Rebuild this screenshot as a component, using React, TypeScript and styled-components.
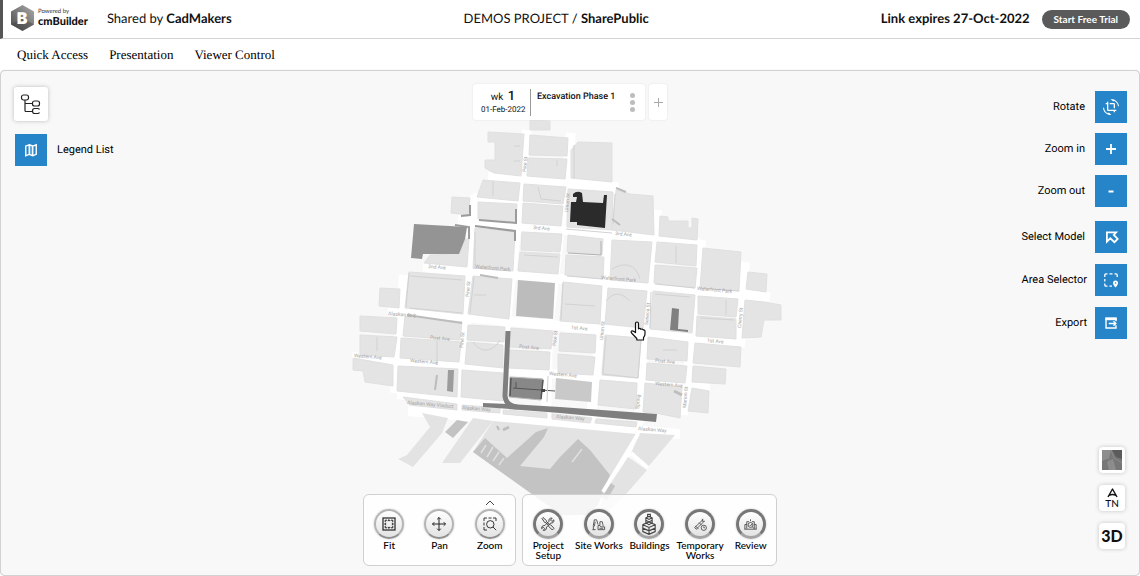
import React from 'react';
import styled, { createGlobalStyle } from 'styled-components';
import { MdCropRotate } from 'react-icons/md';

const lato = `Lato, "Open Sans", sans-serif`;
const roboto = `Roboto, "Liberation Sans", sans-serif`;

const GlobalStyle = createGlobalStyle`
  *, *::before, *::after { box-sizing: border-box; }
  body { margin: 0; background: #fff; color: #111; font-family: ${lato}; text-rendering: geometricPrecision; }
  button { font: inherit; color: inherit; padding: 0; border: 0; background: none; cursor: pointer; }
  h1, p { margin: 0; }
`;

const Page = styled.div`
  display: flex;
  flex-direction: column;
  min-height: 100vh;
`;

const Header = styled.header`
  display: flex;
  justify-content: space-between;
  align-items: center;
  height: 39px;
  padding: 0 10px 2px 8px;
  border-left: 3px solid #555;
  border-bottom: 1px solid #d4d4d4;
  font-size: 13px;
`;

const HeaderSide = styled.div<{ $gap: number }>`
  display: flex;
  align-items: center;
  gap: ${(p) => p.$gap}px;
`;

const Brand = styled.a`
  display: flex;
  align-items: center;
  gap: 4px;
  color: #111;
  text-decoration: none;
`;

const BrandText = styled.span`
  display: grid;
  padding-bottom: 2px;
  font: 900 11px/11px ${lato};
`;

const Powered = styled.small`
  font: 400 6px/8px ${lato};
  color: #333;
`;

const Title = styled.h1`
  font-size: 13px;
  font-weight: 400;
`;

const TrialButton = styled.button`
  height: 19px;
  margin-top: 2px;
  padding: 0 12px;
  border-radius: 10px;
  background: #5a5a5a;
  color: #fff;
  font: 700 10px/19px ${lato};
`;

const Nav = styled.nav`
  display: flex;
  align-items: center;
  gap: 21px;
  height: 31px;
  padding: 0 17px;
`;

const NavLink = styled.a`
  color: #000;
  font: 400 13px/16px "Liberation Serif", serif;
  text-decoration: none;
`;

const Viewport = styled.main`
  position: relative;
  flex: 1;
  display: grid;
  grid-template-columns: 1fr auto 1fr;
  grid-template-rows: auto 1fr auto;
  overflow: hidden;
  border: 1px solid #d2d2d2;
  border-radius: 5px;
  background: #f8f8f8;
  box-shadow: 0 0 1px #ccc;
`;

const MapLayer = styled.div`
  position: absolute;
  inset: 44px 0 auto;
  display: flex;
  justify-content: center;
`;

const LeftTools = styled.div`
  position: relative;
  display: grid;
  align-content: start;
  gap: 13px;
  padding: 16px 0 0 13px;
`;

const TreeButton = styled.button`
  display: grid;
  place-items: center;
  width: 34px;
  height: 34px;
  border-radius: 3px;
  background: #fff;
  box-shadow: 0 0 4px #bbb;
`;

const ToolRow = styled.label<{ $gap: number; $left?: boolean }>`
  display: flex;
  flex-direction: ${(p) => (p.$left ? 'row-reverse' : 'row')};
  align-items: center;
  justify-content: flex-end;
  gap: ${(p) => p.$gap}px;
  padding-left: ${(p) => (p.$left ? 1 : 0)}px;
  font: 400 11px/16px ${roboto};
  color: #000;
`;

const ToolButton = styled.button`
  display: grid;
  place-items: center;
  width: 32px;
  height: 32px;
  background: #2684c8;
  color: #fff;
`;

const RightTools = styled.div`
  position: relative;
  grid-column: 3;
  grid-row: 1 / 3;
  display: grid;
  align-content: start;
  gap: 14px;
  padding: 20px 12px 0 0;
`;

const ToolGroup = styled.div<{ $gap: number }>`
  display: grid;
  gap: ${(p) => p.$gap}px;
`;

const PhaseBar = styled.div`
  position: relative;
  grid-column: 2;
  display: flex;
  gap: 4px;
  height: 36px;
  margin-top: 13px;
`;

const PhaseCard = styled.section`
  display: flex;
  align-items: flex-start;
  width: 172px;
  padding: 5px 8px;
  border-radius: 3px;
  background: #fff;
  box-shadow: 0 0 2px #ddd;
  font: 400 9px/14px ${roboto};
`;

const Week = styled.div`
  width: 50px;
  height: 27px;
  padding-right: 5px;
  border-right: 1px solid #999;
  text-align: center;
  white-space: nowrap;
`;

const WeekNumber = styled.p`
  font-size: 10px;
  line-height: 16px;
  b { margin-left: 2px; font-size: 13px; font-weight: 500; }
`;

const WeekDate = styled.p`
  font: 400 8px/8px ${roboto};
`;

const PhaseName = styled.p`
  flex: 1;
  padding-left: 6px;
  font-weight: 500;
  line-height: 16px;
  white-space: nowrap;
`;

const MoreButton = styled.button`
  display: grid;
  gap: 2px;
  padding: 4px 2px;
`;

const Dot = styled.span`
  width: 5px;
  height: 5px;
  border-radius: 50%;
  background: #bdbdbd;
`;

const AddButton = styled.button`
  display: grid;
  place-items: center;
  width: 18px;
  border-radius: 3px;
  background: #fff;
  box-shadow: 0 0 2px #ddd;
`;

const Dock = styled.div`
  position: relative;
  grid-column: 1 / 4;
  grid-row: 3;
  justify-self: center;
  display: flex;
  gap: 6px;
  margin-bottom: 9px;
`;

const DockPanel = styled.div<{ $count: number }>`
  display: grid;
  grid-template-columns: repeat(${(p) => p.$count}, 1fr);
  width: ${(p) => p.$count * 51}px;
  height: 72px;
  padding-top: 14px;
  border: 1px solid #d0d0d0;
  border-radius: 6px;
  background: rgba(255, 255, 255, 0.84);
`;

const DockItem = styled.button`
  position: relative;
  display: flex;
  flex-direction: column;
  align-items: center;
  gap: 1px;
  min-width: 0;
  color: #000;
  font: 500 10px/10px ${lato};
`;

const Knob = styled.span<{ $dark?: boolean }>`
  display: grid;
  place-items: center;
  flex: none;
  width: 30px;
  height: 30px;
  border: ${(p) => (p.$dark ? '3px solid #777' : '2px solid #b4b4b4')};
  border-bottom-color: ${(p) => (p.$dark ? '#a4a4a4' : '#8f8f8f')};
  border-radius: 50%;
  background: linear-gradient(#fff, #e3e3e3);
  box-shadow: 0 0 2px #bbb;
  color: ${(p) => (p.$dark ? '#444' : '#222')};
`;

const Chevron = styled.svg`
  position: absolute;
  top: -9px;
  left: 50%;
  margin-left: -5px;
`;

const MapButtons = styled.div`
  position: relative;
  grid-column: 3;
  grid-row: 2 / 4;
  justify-self: end;
  align-self: end;
  display: grid;
  gap: 12px;
  padding: 0 14px 26px 0;
`;

const MapButton = styled.button`
  display: grid;
  place-items: center;
  align-content: center;
  width: 26px;
  height: 26px;
  border-radius: 4px;
  background: #fff;
  box-shadow: 0 0 4px #c4c4c4;
  color: #111;
  font: 900 16px/16px ${lato};
`;

const North = styled.span`
  font: 500 10px/10px ${lato};
`;

const Cursor = styled.svg`
  position: absolute;
  top: 206px;
  left: 50%;
  margin-left: 60px;
`;

const LAND: string[] = [
  '530,120 550,121 550,130 530,130',
  '488,132 524,134 521,176 494,173 485,168 485,160 495,160 495,142 488,142',
  '530,135 568,138 567,156 529,155',
  '528,158 567,159 565,179 527,176',
  '483,180 520,183 518,201 477,197',
  '524,184 566,187 563,204 523,201',
  '452,197 470,198 468,215 451,213',
  '478,202 517,204 516,222 478,219',
  '523,203 563,206 561,226 522,223',
  '430,255 459,254 465,239 469,239 467,267 424,263',
  '475,228 515,232 513,271 473,268',
  '522,232 562,234 560,252 521,250',
  '520,252 560,254 558,274 518,271',
  '409,272 465,276 463,314 405,308',
  '380,288 400,289 399,308 379,306',
  '473,276 512,279 509,319 468,314',
  '578,142 612,143 612,182 571,178 571,150',
  '568,189 613,192 612,230 567,227',
  '616,190 630,194 653,196 654,235 612,230',
  '568,235 603,239 602,255 567,252',
  '566,255 604,257 603,279 565,275',
  '612,240 652,242 648,283 610,280',
  '660,216 668,217 668,221 688,221 688,228 692,228 692,218 698,219 697,240 659,236',
  '657,242 697,245 696,266 655,262',
  '655,265 697,268 695,288 654,283',
  '703,248 741,252 739,291 700,288',
  '748,272 767,274 766,292 746,289',
  '563,282 602,286 600,324 560,321',
  '608,288 647,291 643,328 605,324',
  '653,291 695,295 692,333 650,329',
  '698,296 738,299 736,317 698,314',
  '697,316 736,319 736,339 696,336',
  '745,300 764,302 781,305 781,320 764,320 761,337 742,338',
  '360,316 397,318 396,334 360,331',
  '405,316 462,322 460,340 403,336',
  '468,325 505,327 504,342 467,340',
  '360,335 397,337 394,357 360,355',
  '401,338 461,342 459,362 400,358',
  '467,342 503,345 503,368 465,364',
  '511,328 553,331 551,349 510,347',
  '510,350 550,352 549,370 509,368',
  '353,358 393,365 393,386 365,382 363,371 353,370',
  '398,366 458,369 457,397 397,391',
  '462,370 503,373 503,401 461,397',
  '560,333 596,335 595,353 559,351',
  '558,354 595,357 593,375 558,373',
  '605,335 641,338 638,378 602,375',
  '600,380 637,383 636,409 598,405',
  '648,337 688,342 687,361 647,359',
  '647,363 687,366 685,383 646,380',
  '645,383 682,387 680,418 656,413 643,412',
  '695,343 741,347 740,367 693,363',
  '693,366 726,369 725,384 692,382',
  '692,388 709,391 708,413 688,411',
  '403,397 457,404 457,410 410,405',
  '462,405 500,408 500,413 462,410',
  '503,410 547,413 547,418 503,414',
  '552,414 592,418 590,423 552,419',
  '596,419 637,422 636,427 595,423',
];

const SHORE: string[] = [
  '422,413 448,418 442,433 413,467 398,459 407,455 430,427',
  '473,418 493,421 460,463 442,463',
  '493,421 637,434 604,497 570,520 473,452',
  '640,433 675,435 648,467 631,453',
  '628,457 647,470 627,493 608,512 600,505 613,480',
];

const ROADS: string[] = [
  'M488 177 614 187', 'M473 198 565 205', 'M458 220 700 243', 'M423 267 770 297',
  'M388 310 745 343', 'M352 357 710 387', 'M397 394 503 404', 'M408 411 680 434',
  'M527 130 505 330 500 415', 'M571 133 548 330 546 418', 'M614 182 600 330 590 430',
  'M657 210 645 330 637 434', 'M701 240 692 340 683 415', 'M745 262 738 345',
  'M475 195 467 315 458 412', 'M404 275 395 393', 'M638 434 601 495',
];

const LABELS: [number, number, string][] = [
  [533, 229, '3rd Ave'], [615, 235, '3rd Ave'], [428, 268, '2nd Ave'], [571, 329, '1st Ave'],
  [707, 342, '1st Ave'], [388, 315, 'Alaskan St S'], [430, 339, 'Post Ave'], [519, 348, 'Post Ave'],
  [410, 362, 'Western Ave'], [354, 357, 'Western Ave'], [549, 375, 'Western Ave'],
  [655, 385, 'Western Ave'], [655, 362, 'Post Ave'], [638, 430, 'Alaskan Way'],
  [601, 279, 'Waterfront Park'], [697, 290, 'Waterfront Park'], [475, 268, 'Waterfront Park'],
  [407, 404, 'Alaskan Way Viaduct'], [462, 409, 'Alaskan Way'], [556, 418, 'Alaskan Way'],
];

const SIDE_LABELS: [number, number, string][] = [
  [526, 172, 'Pike St'], [469, 297, 'Pine St'], [568, 212, 'Union St'], [603, 340, 'Union St'],
  [648, 325, 'Seneca St'], [741, 328, 'Cherry St'], [639, 409, 'Spring'], [686, 408, 'Marion St'],
  [463, 348, 'Pine St'], [556, 346, 'Pike St'],
];

function CityMap() {
  return (
    <svg width="440" height="400" viewBox="350 115 440 400" role="img" aria-label="City site model">
      <g fill="none" stroke="#fff" strokeWidth="10">
        {ROADS.map((d) => <path key={d} d={d} />)}
      </g>
      <g fill="#e3e3e3">
        {SHORE.map((p) => <polygon key={p} points={p} />)}
      </g>
      <g fill="#e4e4e4" stroke="#e0e0e0" strokeWidth="1">
        {LAND.map((p) => <polygon key={p} points={p} />)}
      </g>
      <g fill="#c3c3c3">
        <path d="M473 452 485 438 507 458 536 432 548 428 544 437 520 466 550 469 560 457 578 439 590 450 610 475 598 505 575 525Z" />
        <path d="M457 420 468 422 453 438 445 432Z" />
        <path d="M518 280 555 283 553 319 516 316Z" fill="#bcbcbc" />
        <path d="M556 378 592 382 591 402 555 399Z" fill="#c9c9c9" />
        <path d="M601 497l10-14 4 3-8 14Z" />
      </g>
      <path d="M481 453l5-8M487 457l6-10M493 461l6-9M499 465l5-7M572 462l10-13" stroke="#e0e0e0" strokeWidth="1.500" />
      <path d="M638 434 603 492M631 453 648 468" stroke="#fff" strokeWidth="4" fill="none" />
      <g fill="none" stroke="#d2d2d2" strokeWidth="1">
        <path d="M493 181v15M538 187l3 12 20 2M514 146h6M514 161h6M557 160v6M676 246v17M437 341v24M377 337v14M473 342c8 12 20 10 27-2M474 295h12M565 304l30 2M606 301c8-10 16-8 24 0M655 294l35 3M726 300v15M663 350h14M700 318l34 2M574 145v33M615 194l-2 30M566 229l46 4M410 276l52 4M475 232v34M524 255l34 2" />
        <path d="M612 269c14-8 24-4 28 10" />
        <path d="M410 308 462 313M473 268l38 3M409 273l-3 34M474 277l-4 36M563 283l-2 37M606 336l-3 38 35 4 3-38M651 292l-1 36M567 276l36 3M655 284l40 4M701 288l38 3" />
      </g>
      <g fill="none" stroke="#9b9b9b">
        <path d="M461 216 470 215V205M455 225l14 2v12" strokeWidth="2" />
        <path d="M479 220 516 223V209M475 226l40 5v10" strokeWidth="2" />
        <path d="M568 253l33 2v-14" strokeWidth="1" stroke="#b0b0b0" />
        <path d="M616 188l10 4M612 219l8 6M480 275l18 3" strokeWidth="2" stroke="#bcbcbc" />
        <path d="M407 315l55 8M437 375l-2 15M497 426l2 4" strokeWidth="2" stroke="#bcbcbc" />
        <path d="M503 430l6-3M674 391l8 4" strokeWidth="3" stroke="#bdbdbd" />
      </g>
      <path d="M414 224 467 227 465 239 459 254 423 254 422 259 411 258Z" fill="#949494" />
      <path d="M573 194Q577 190 582 193L583 202 603 203 604 195 607 195 605 228 577 225 577 222 570 222 571 202 576 202 577 197 573 197Z" fill="#2b2b2b" />
      <path d="M672 308 679 309 678 329 688 330 688 332 670 330Z" fill="#808080" />
      <path d="M448 370 454 370 453 392 447 391Z" fill="#9c9c9c" />
      <path d="M508 331 505 396Q506 406 517 407" fill="none" stroke="#7f7f7f" strokeWidth="5" />
      <path d="M483 403 510 404 560 407 657 414 656 422 560 413 483 407Z" fill="#7f7f7f" />
      <path d="M510 377 543 379 541 400 509 397Z" fill="#888" stroke="#b9b9b9" strokeWidth="1" />
      <path d="M511 378 510 396M543 380l-2 19" stroke="#555" strokeWidth="1.500" />
      <path d="M513 388 555 391M516 382v6" stroke="#555" strokeWidth="1" fill="none" />
      <path d="M548 376l-1 26" stroke="#cfcfcf" />
      <path d="M541 389h4v3h-4Z" fill="#444" />
      <g fill="#a2a2a2" fontFamily="Roboto, sans-serif" fontSize="5">
        {LABELS.map(([x, y, t]) => (
          <text key={`${x}-${y}`} x={x} y={y} transform={`rotate(5 ${x} ${y})`}>{t}</text>
        ))}
        {SIDE_LABELS.map(([x, y, t]) => (
          <text key={`${x}-${y}`} x={x} y={y} transform={`rotate(-85 ${x} ${y})`}>{t}</text>
        ))}
      </g>
    </svg>
  );
}

function Icon({ size = 16, width = 2, children }: { size?: number; width?: number; children: React.ReactNode }) {
  return (
    <svg width={size} height={size} viewBox="0 0 16 16" fill="none" stroke="currentColor" strokeWidth={width} aria-hidden="true">
      {children}
    </svg>
  );
}

const icons = {
  legend: (
    <Icon size={14} width={1.600}>
      <path d="M2 3.500 6 2v11l-4 1.500ZM6 2l4 1.500v11L6 13M10 3.500 14 2v11l-4 1.500" />
      <path d="M6 2l4 1.500v11L6 13Z" fill="currentColor" stroke="none" opacity=".3" />
    </Icon>
  ),
  plus: <Icon size={16} width={1.800}><path d="M8 3v10M3 8h10" /></Icon>,
  minus: <Icon width={1.800}><path d="M5.500 8.500h5" /></Icon>,
  select: (
    <svg width="16" height="16" viewBox="0 0 16 16" fill="none" stroke="currentColor" strokeWidth="1.800" aria-hidden="true">
      <path d="M3.900 3.400h9.200L10.800 5.900l3.900 4-3.300 3.300-4.100-3.900-3.400 3.400Z" />
    </svg>
  ),
  area: (
    <Icon size={16} width={1.300}>
      <path d="M1.800 5V3q0-1.200 1.200-1.200h1.500M6.500 1.800h3M11.500 1.800H13q1.200 0 1.200 1.200v2M1.800 7v2.500M1.800 11.500V13q0 1.200 1.200 1.200h1.500M6.500 14.200h2.500" />
      <path d="M12.500 15.500C10.800 13.600 10 12.400 10 11a2.500 2.500 0 0 1 5 0c0 1.400-.8 2.600-2.500 4.500Z" fill="currentColor" stroke="none" />
      <circle cx="12.500" cy="11" r=".8" fill="#2684c8" stroke="none" />
    </Icon>
  ),
  export: (
    <Icon size={14} width={1.600}>
      <path d="M13.700 6V3H2.300v10.700h11.400v-3M5.500 8.500h7.500" />
      <path d="M1.500 1.500h13v3.300h-13Z" fill="currentColor" stroke="none" />
      <path d="m10.800 6 2.700 2.500-2.700 2.500" />
    </Icon>
  ),
  tree: (
    <svg width="22" height="22" viewBox="0 0 22 22" fill="none" stroke="#222" strokeWidth="1.200" aria-hidden="true">
      <rect x="1.500" y="2" width="7" height="5" rx="2" />
      <rect x="12.500" y="8" width="7" height="5" rx="2" />
      <path d="M5 7v10.500q0 1 1 1h6.500M5 10.500h7.500M19.500 16.500q-.5-1-2-1h-3q-2 0-2 2.500t2 2.500h3q1.500 0 2-1" />
    </svg>
  ),
  fit: (
    <Icon width={1.200}>
      <rect x="2" y="2" width="12" height="12" />
      <path d="M6.700 4.700 8 3.400l1.300 1.300ZM6.700 11.300 8 12.600l1.300-1.300ZM4.700 6.700 3.400 8l1.300 1.300ZM11.300 6.700 12.600 8l-1.300 1.300Z" fill="currentColor" strokeWidth=".5" />
      <path d="M4.200 6V4.200H6M10 4.200h1.800V6M4.200 10v1.800H6M10 11.800h1.800V10" strokeWidth="1" />
    </Icon>
  ),
  pan: <Icon width={1}><path d="M8 1.500v13M1.500 8h13M6.200 3.300 8 1.500l1.800 1.800M6.200 12.700 8 14.500l1.800-1.800M3.300 6.200 1.500 8l1.800 1.800M12.700 6.200 14.500 8l-1.800 1.800" /></Icon>,
  zoom: (
    <Icon width={0.900}>
      <path d="M2 5V2h3M11 2h3v3M2 11v3h3M6.500 2h3M2 6.500v3" />
      <circle cx="8.300" cy="8.300" r="3.700" />
      <path d="m11 11 3.200 3.200" />
    </Icon>
  ),
  tools: (
    <Icon width={1}>
      <path d="m2 2.500 1-1 3.500 3.200.2 1.200 2.600 2.600 1.300.3 3.400 3.500-1.700 1.700-3.500-3.500-.3-1.200L5.900 6.700l-1.200-.2Z" />
      <path d="M13.800 3.800 12 5.500l-1.500-1.500 1.700-1.800C10 1.500 8.500 3.200 9 5.300L4.800 9.500c-2-.4-3.600 1.200-3.100 3.200l1.600-1.500 1.500 1.500-1.600 1.600c2 .6 3.800-1.100 3.300-3.100L10.700 7c2 .5 3.700-1.100 3.100-3.200Z" />
    </Icon>
  ),
  site: (
    <Icon size={15} width={0.900}>
      <path d="M2.500 13.500V9l1-6h2.500l1.500 5M1.500 13.500h3.500M4.500 5 3.500 10M7.500 9h2V5h2.500l1 4.500M7.500 9v4.500h7v-3h-4L9.500 9M9 12h4" />
    </Icon>
  ),
  buildings: (
    <Icon size={22} width={0.800}>
      <path d="m8 6.500 4.500 2v5L8 15.500l-4.500-2v-5ZM8 10.500v5M3.500 8.500l4.500 2 4.500-2M3.500 11 8 13l4.500-2M5.700 7.300V3.500L8 2.500l2.300 1v3.800L8 8.500ZM5.700 3.500 8 4.700l2.300-1.200M5.700 5.300 8 6.500l2.300-1.200M7 2.500V1h2v1.500" />
    </Icon>
  ),
  temporary: (
    <Icon size={15} width={0.900}>
      <path d="m2 11 9-8.500M4 12.500l8-8M2.500 9.500l3.500 3.500M10 2v2.500h2.500M6.500 6l2.500 2.500M1.500 11l2.500 2.500" />
      <circle cx="11.500" cy="11.500" r="2.800" />
      <path d="M11.500 10v1.500h1.200" />
    </Icon>
  ),
  review: (
    <Icon size={15} width={0.900}>
      <path d="M4 12.500V5h2.500M9.500 5H12v7.500M1.500 13h13M2 13V8h2M14 13V8h-2M8 2.500v2" />
      <circle cx="8" cy="8.500" r="2.600" />
      <path d="m7 8.500 1 1 1.500-2M10 10.500l2 2" />
    </Icon>
  ),
};

function Tool({ label, gap, left, children }: { label: string; gap: number; left?: boolean; children: React.ReactNode }) {
  return (
    <ToolRow $gap={gap} $left={left}>
      <span>{label}</span>
      <ToolButton type="button">{children}</ToolButton>
    </ToolRow>
  );
}

export default function App() {
  return (
    <Page>
      <GlobalStyle />
      <Header>
        <HeaderSide $gap={19}>
          <Brand href="#">
            <svg width="23" height="26" viewBox="0 0 23 26" aria-hidden="true">
              <defs>
                <linearGradient id="hex" x1="1" y1="0" x2="0" y2="1">
                  <stop offset="0" stopColor="#aaa" />
                  <stop offset="1" stopColor="#4a4a4a" />
                </linearGradient>
              </defs>
              <path d="M11.500 0 23 6.500v13L11.500 26 0 19.500v-13Z" fill="url(#hex)" />
              <path d="M0 19.500 11.500 13 23 19.500 11.500 26Z" fill="#333" opacity=".35" />
              <text x="11" y="19" textAnchor="middle" fill="#fff" fontFamily="Inter, sans-serif" fontWeight="900" fontSize="16">B</text>
            </svg>
            <BrandText>
              <Powered>Powered by</Powered>
              cmBuilder
            </BrandText>
          </Brand>
          <span>Shared by <b>CadMakers</b></span>
        </HeaderSide>
        <Title>DEMOS PROJECT / <b>SharePublic</b></Title>
        <HeaderSide $gap={12}>
          <b>Link expires 27-Oct-2022</b>
          <TrialButton type="button">Start Free Trial</TrialButton>
        </HeaderSide>
      </Header>
      <Nav>
        <NavLink href="#">Quick Access</NavLink>
        <NavLink href="#">Presentation</NavLink>
        <NavLink href="#">Viewer Control</NavLink>
      </Nav>
      <Viewport>
        <MapLayer>
          <CityMap />
          <Cursor width="16" height="20" viewBox="0 0 16 20" aria-hidden="true">
            <path d="M5.500 11.500V2.800Q5.500 1 7 1t1.500 1.800v5Q10 6.800 11 8.300q1.600-.8 2.300.7 1.700-.3 1.700 1.500v2.200q0 2-1.500 4V19H6.800v-1.500L2 12.500q-1.800-2 0-2.700 1.400-.2 3.500 1.700Z" fill="#fff" stroke="#111" strokeWidth="1.200" strokeLinejoin="round" />
          </Cursor>
        </MapLayer>
        <LeftTools>
          <TreeButton type="button" aria-label="Model tree">{icons.tree}</TreeButton>
          <Tool label="Legend List" gap={10} left>{icons.legend}</Tool>
        </LeftTools>
        <PhaseBar>
          <PhaseCard>
            <Week>
              <WeekNumber>wk <b>1</b></WeekNumber>
              <WeekDate>01-Feb-2022</WeekDate>
            </Week>
            <PhaseName>Excavation Phase 1</PhaseName>
            <MoreButton type="button" aria-label="More"><Dot /><Dot /><Dot /></MoreButton>
          </PhaseCard>
          <AddButton type="button" aria-label="Add phase">
            <svg width="9" height="9" viewBox="0 0 9 9" stroke="#aaa" aria-hidden="true"><path d="M4.500 0v9M0 4.500h9" /></svg>
          </AddButton>
        </PhaseBar>
        <RightTools>
          <ToolGroup $gap={10}>
            <Tool label="Rotate" gap={10}><MdCropRotate size={16} /></Tool>
            <Tool label="Zoom in" gap={10}>{icons.plus}</Tool>
            <Tool label="Zoom out" gap={10}>{icons.minus}</Tool>
          </ToolGroup>
          <ToolGroup $gap={11}>
            <Tool label="Select Model" gap={10}>{icons.select}</Tool>
            <Tool label="Area Selector" gap={8}>{icons.area}</Tool>
            <Tool label="Export" gap={8}>{icons.export}</Tool>
          </ToolGroup>
        </RightTools>
        <MapButtons>
          <MapButton type="button" aria-label="Satellite">
            <svg width="20" height="20" viewBox="0 0 20 20" aria-hidden="true">
              <path d="M0 0h20v20H0Z" fill="#777" />
              <path d="M0 0h9l-2 8-7 3ZM5 12l6-3 3 11H7Z" fill="#8d8d8d" />
              <path d="M10 0h10v9l-6-2Z" fill="#5b5b5b" />
              <path d="M0 7c8 0 10 5 9 13M9 0l3 8 8 5" stroke="#8b8b8b" fill="none" />
            </svg>
          </MapButton>
          <MapButton type="button" aria-label="True north">
            <svg width="13" height="10" viewBox="0 0 13 10" fill="none" stroke="#111" strokeWidth="1.400" aria-hidden="true">
              <path d="M2 9 6.500 1 11 9M3 7.500q3.500-2 7 0" strokeLinejoin="round" />
            </svg>
            <North>TN</North>
          </MapButton>
          <MapButton type="button">3D</MapButton>
        </MapButtons>
        <Dock>
          <DockPanel $count={3}>
            <DockItem type="button"><Knob>{icons.fit}</Knob>Fit</DockItem>
            <DockItem type="button"><Knob>{icons.pan}</Knob>Pan</DockItem>
            <DockItem type="button">
              <Chevron width="10" height="6" viewBox="0 0 10 6" fill="none" stroke="#444" aria-hidden="true"><path d="m1 5 4-4 4 4" /></Chevron>
              <Knob>{icons.zoom}</Knob>Zoom
            </DockItem>
          </DockPanel>
          <DockPanel $count={5}>
            <DockItem type="button"><Knob $dark>{icons.tools}</Knob>Project Setup</DockItem>
            <DockItem type="button"><Knob $dark>{icons.site}</Knob>Site Works</DockItem>
            <DockItem type="button"><Knob $dark>{icons.buildings}</Knob>Buildings</DockItem>
            <DockItem type="button"><Knob $dark>{icons.temporary}</Knob>Temporary Works</DockItem>
            <DockItem type="button"><Knob $dark>{icons.review}</Knob>Review</DockItem>
          </DockPanel>
        </Dock>
      </Viewport>
    </Page>
  );
}
